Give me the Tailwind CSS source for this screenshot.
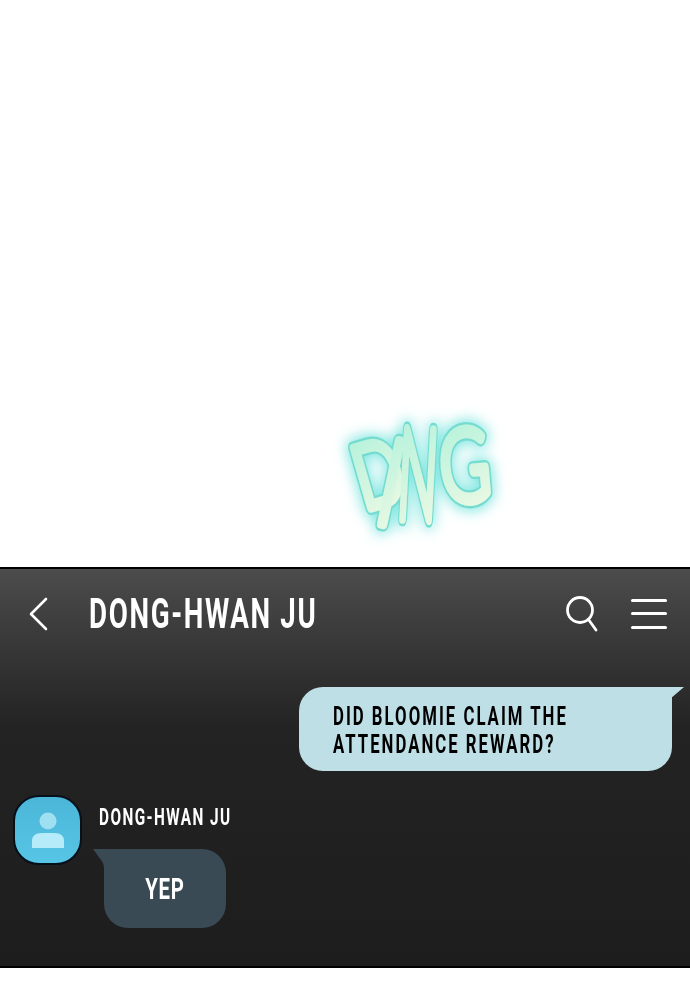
<!DOCTYPE html>
<html lang="en">
<head>
    <meta charset="UTF-8">
    <meta name="viewport" content="width=device-width, initial-scale=1.0">
    <title>Dong-Hwan Ju</title>
    <script src="https://cdn.jsdelivr.net/npm/@tailwindcss/browser@4"></script>
</head>
<body class="bg-white font-['Roboto',sans-serif] overflow-hidden">
    <div class="w-[690px] h-[1000px] flex flex-col">
        <!-- sound effect -->
        <div class="relative h-[567px] shrink-0 bg-white">
            <svg class="absolute left-[330px] top-[410px] overflow-visible" width="180" height="130" viewBox="0 0 180 130" font-family="Lato, sans-serif" font-size="100" font-weight="300">
                <defs>
                    <linearGradient id="fillGrad" x1="0.3" y1="0" x2="0.5" y2="1">
                        <stop offset="0" stop-color="#aef1da"/>
                        <stop offset="1" stop-color="#eef9e4"/>
                    </linearGradient>
                    <filter id="glow" x="-30%" y="-30%" width="160%" height="160%">
                        <feGaussianBlur stdDeviation="7"/>
                    </filter>
                    <g id="letters">
                        <text vector-effect="non-scaling-stroke" transform="translate(34 100) rotate(-16) scale(0.62 0.88)">D</text>
                        <text vector-effect="non-scaling-stroke" transform="translate(42 112) rotate(12) scale(0.8 1.2)">I</text>
                        <text vector-effect="non-scaling-stroke" transform="translate(66 108) rotate(3) scale(0.52 1.26)">N</text>
                        <text vector-effect="non-scaling-stroke" transform="translate(113 93) rotate(-5) scale(0.68 1)">G</text>
                    </g>
                </defs>
                <use href="#letters" fill="#7fe6e0" stroke="#7fe6e0" stroke-width="16" stroke-linejoin="round" filter="url(#glow)"/>
                <use href="#letters" fill="none" stroke="#74dbd0" stroke-width="12" stroke-linejoin="round"/>
                <use href="#letters" fill="url(#fillGrad)" stroke="url(#fillGrad)" stroke-width="8" stroke-linejoin="round"/>
            </svg>
        </div>

        <!-- chat panel -->
        <div class="h-[401px] shrink-0 border-y-2 border-black bg-linear-to-b from-[#4c4c4c] from-0% via-[#232323] via-[40%] to-[#1d1d1d] text-white">
            <header class="h-[86px] flex items-center pl-[29px] pr-[23px] pt-[3px]">
                <svg class="w-[19px] h-[34px] shrink-0" viewBox="0 0 19 34" fill="none" stroke="#fff" stroke-width="2.6" stroke-linecap="round" stroke-linejoin="round">
                    <path d="M17 2 L2 17 L17 32"/>
                </svg>
                <h1 class="ml-[41px] text-[42px] leading-none font-bold tracking-[2.5px] whitespace-nowrap origin-left scale-x-[0.66]">DONG-HWAN JU</h1>
                <svg class="ml-auto w-[32px] h-[36px] shrink-0" viewBox="0 0 32 36" fill="none" stroke="#fff" stroke-width="2.8" stroke-linecap="round">
                    <circle cx="14" cy="14" r="12.5"/>
                    <path d="M22.5 23.5 L30 34"/>
                </svg>
                <div class="ml-[33px] w-[36px] flex flex-col gap-[10.5px] shrink-0">
                    <span class="h-[3px] rounded-full bg-white"></span>
                    <span class="h-[3px] rounded-full bg-white"></span>
                    <span class="h-[3px] rounded-full bg-white"></span>
                </div>
            </header>

            <div class="pt-[32px] flex justify-end pr-[18px]">
                <div class="relative w-[373px] h-[84px] bg-[#bfdfe7] rounded-tl-[24px] rounded-bl-[24px] rounded-br-[24px] rounded-tr-[6px] pl-[34px] pt-[16px] text-black">
                    <svg class="absolute left-[366px] top-0" width="20" height="22" viewBox="0 0 20 22" fill="#bfdfe7"><path d="M0 0 H19 L5 12 Q7 16 7 22 H0 Z"/></svg>
                    <p class="text-[25px] leading-[28px] font-bold tracking-[3px] whitespace-nowrap origin-left scale-x-[0.67]">DID BLOOMIE CLAIM THE<br>ATTENDANCE REWARD?</p>
                </div>
            </div>

            <div class="mt-[24px] flex pl-[13px]">
                <div class="w-[69px] h-[70px] shrink-0 rounded-[26px] border-2 border-[#05101a] bg-linear-to-b from-[#4bb6d8] to-[#57c5e6] flex items-center justify-center">
                    <svg class="w-[34px] h-[36px]" viewBox="0 0 34 36">
                        <circle cx="17" cy="9" r="8.5" fill="#9fdff2"/>
                        <path d="M1 36 V29 Q1 21 11 21 H23 Q33 21 33 29 V36 Z" fill="#b6ecfa"/>
                    </svg>
                </div>
                <div class="ml-[17px]">
                    <div class="text-[24px] leading-none pt-[10px] font-bold tracking-[2.2px] whitespace-nowrap origin-left scale-x-[0.64]">DONG-HWAN JU</div>
                    <div class="relative ml-[5px] mt-[20px] w-[122px] h-[79px] bg-[#394a54] rounded-tl-[6px] rounded-tr-[24px] rounded-bl-[24px] rounded-br-[24px] flex items-center justify-center">
                        <svg class="absolute left-[-11px] top-0" width="18" height="20" viewBox="0 0 18 20" fill="#394a54"><path d="M0 0 H18 V20 H11 Q11 14 8 11 Z"/></svg>
                        <span class="text-[30px] leading-none font-bold tracking-[1px] scale-x-[0.68]">YEP</span>
                    </div>
                </div>
            </div>
        </div>
    </div>
</body>
</html>
